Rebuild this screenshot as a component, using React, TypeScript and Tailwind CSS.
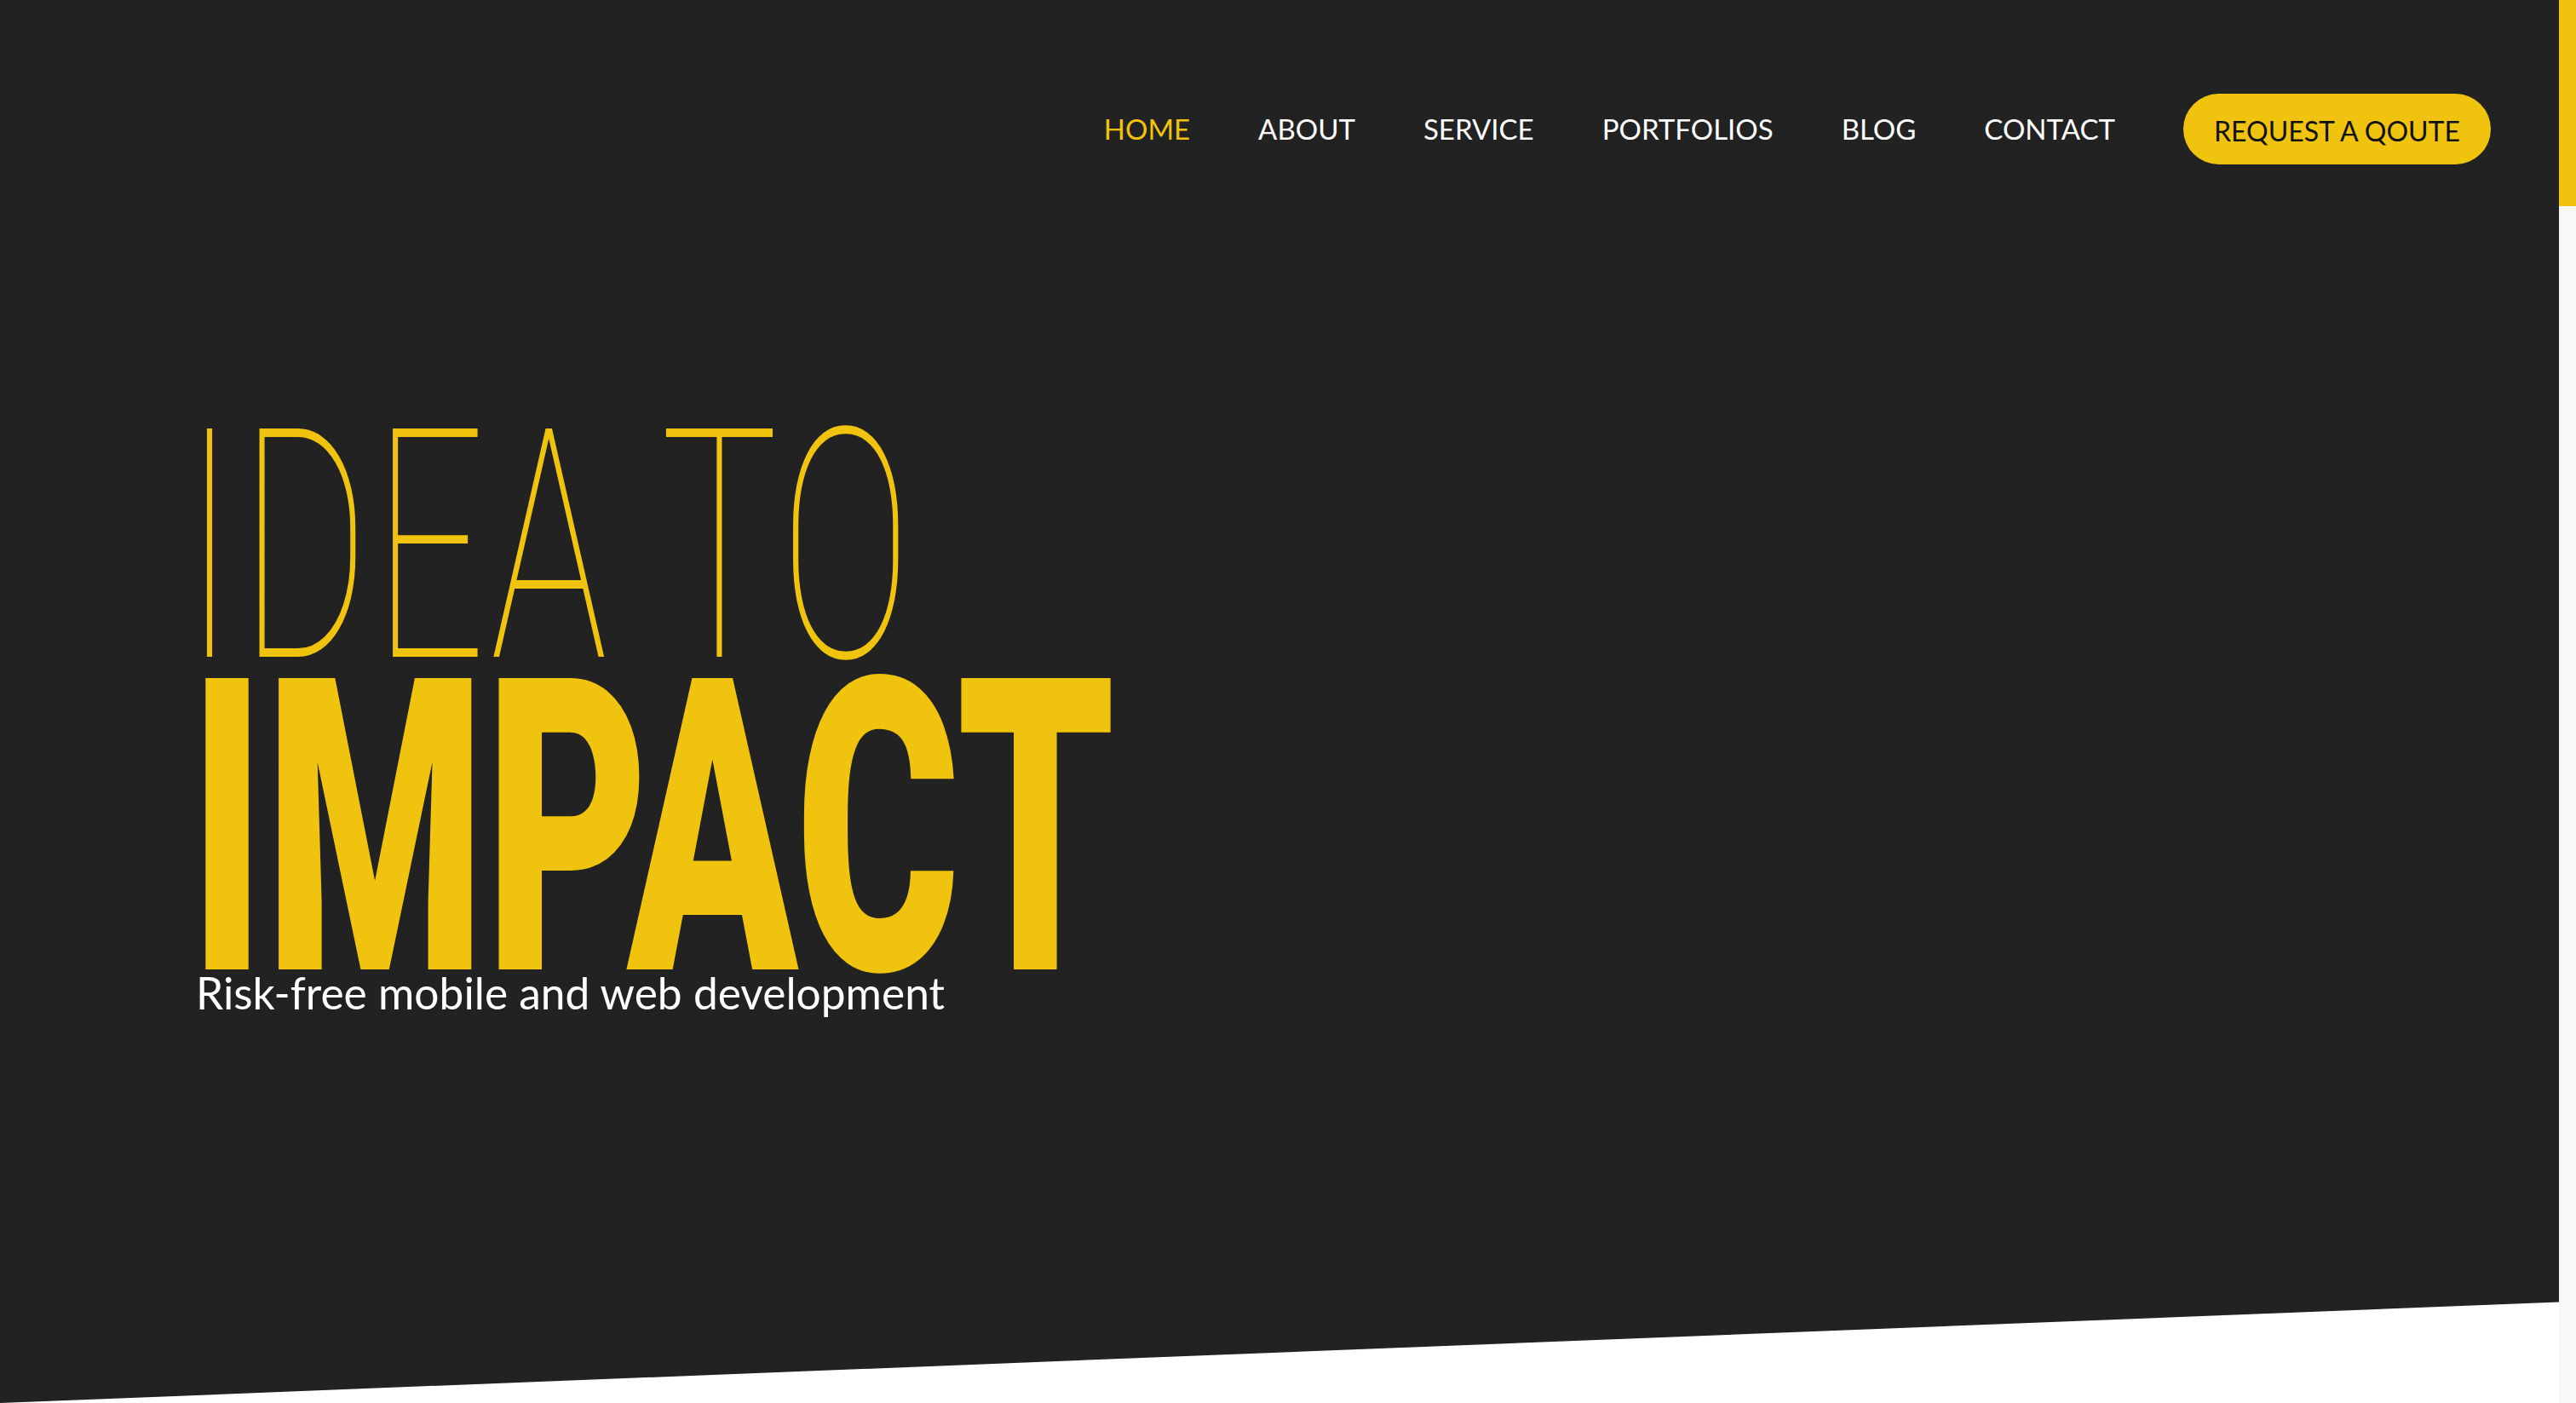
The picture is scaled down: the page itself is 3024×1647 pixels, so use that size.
import React from "react";

const navItems = ["HOME", "ABOUT", "SERVICE", "PORTFOLIOS", "BLOG", "CONTACT"];

function NavBar() {
  return (
    <header className="flex items-center justify-end pr-[80px] pt-[110px]">
      <nav className="flex items-center gap-[80px] font-['Lato',sans-serif] text-[33px] leading-none">
        {navItems.map((item, i) => (
          <a
            key={item}
            href="#"
            className={i === 0 ? "text-[#efc30e]" : "text-white"}
          >
            {item}
          </a>
        ))}
        <a
          href="#"
          className="flex h-[83px] w-[361px] items-center justify-center rounded-full bg-[#efc30e] pt-1 text-[32px] text-[#111]"
        >
          REQUEST A QOUTE
        </a>
      </nav>
    </header>
  );
}

function Hero() {
  return (
    <div className="mt-[308px] flex flex-col pl-[222px]">
      <h1 className="-ml-[6px] origin-left scale-x-[0.61] whitespace-nowrap font-['Roboto',sans-serif] text-[377px] font-thin leading-[0.75] tracking-[10px] text-[#efc30e]">
        IDEA TO
      </h1>
      <h2 className="mt-[22px] origin-left scale-x-[0.613] whitespace-nowrap font-['Roboto',sans-serif] text-[481px] font-black leading-[0.7] text-[#efc30e]">
        IMPACT
      </h2>
      <p className="ml-[8px] whitespace-nowrap font-['Lato',sans-serif] text-[51.5px] leading-[0.9] text-white">
        Risk-free mobile and web development
      </p>
    </div>
  );
}

export default function App() {
  return (
    <div className="flex h-screen w-full overflow-hidden bg-white">
      <div className="flex-1">
        <section className="flex h-full flex-col bg-[#222222] [clip-path:polygon(0_0,100%_0,100%_92.8%,0_100%)]">
          <NavBar />
          <Hero />
        </section>
      </div>
      {/* scrollbar */}
      <div className="w-5 bg-[#f8f8f8]">
        <div className="h-[242px] bg-[#efc30e]" />
      </div>
    </div>
  );
}
